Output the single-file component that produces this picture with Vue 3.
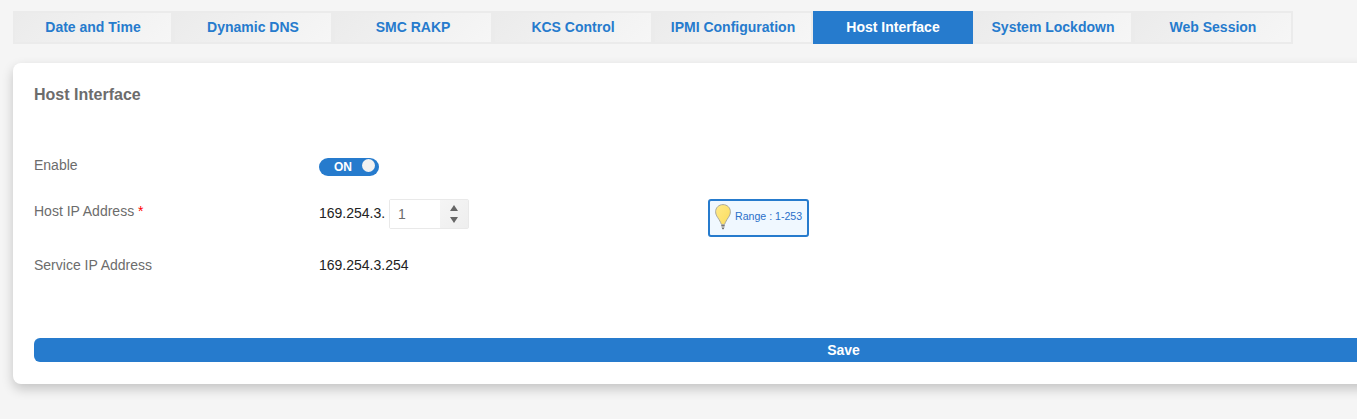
<template>
  <div class="page">
    <nav class="tabs">
      <button
        v-for="tab in tabs"
        :key="tab"
        class="tab"
        :class="{ active: tab === activeTab }"
        @click="activeTab = tab"
      >{{ tab }}</button>
    </nav>

    <section class="panel">
      <h2>Host Interface</h2>

      <div class="row row-enable">
        <span class="label">Enable</span>
        <button class="toggle" :class="{ off: !enabled }" @click="enabled = !enabled">
          <span class="toggle-text">{{ enabled ? 'ON' : 'OFF' }}</span>
          <span class="knob"></span>
        </button>
      </div>

      <div class="row row-host">
        <label class="label" for="hostIp">Host IP Address <span class="required">*</span></label>
        <div class="field">
          <span class="prefix">169.254.3.</span>
          <div class="spinner">
            <input id="hostIp" type="text" v-model.number="hostIp" />
            <div class="spinner-buttons">
              <button @click="step(1)">
                <svg width="8" height="6" viewBox="0 0 8 6"><path d="M4 0L8 6H0Z" fill="#666" /></svg>
              </button>
              <button @click="step(-1)">
                <svg width="8" height="6" viewBox="0 0 8 6"><path d="M0 0H8L4 6Z" fill="#666" /></svg>
              </button>
            </div>
          </div>
        </div>
        <div class="hint">
          <svg class="bulb" width="16" height="26" viewBox="0 0 16 26">
            <defs>
              <linearGradient id="glass" x1="0" y1="0" x2="1" y2="1">
                <stop offset="0" stop-color="#ffea8a" />
                <stop offset="1" stop-color="#fbdc5c" />
              </linearGradient>
            </defs>
            <path d="M8 .6C3.8.6.6 3.7.6 7.8c0 3.2 1.8 5.2 3.4 7.7 1.3 2 1.9 3.7 2.5 5h3c.6-1.3 1.2-3 2.5-5 1.600-2.500 3.400-4.500 3.400-7.700C15.400 3.700 12.200.6 8 .6Z" fill="url(#glass)" stroke="#a9a9a0" stroke-width="1" />
            <path d="M6.4 20.5h3.2v2.5L8.6 25.5H7.4L6.4 23Z" fill="#b0b0b0" />
            <path d="M6.4 21.5h3.2M7 24.5h2" stroke="#777" stroke-width="1" />
          </svg>
          <span>Range : 1-253</span>
        </div>
      </div>

      <div class="row row-service">
        <span class="label">Service IP Address</span>
        <span class="value">169.254.3.254</span>
      </div>

      <button class="save">Save</button>
    </section>
  </div>
</template>

<script setup>
import { ref } from 'vue';

const tabs = [
  'Date and Time',
  'Dynamic DNS',
  'SMC RAKP',
  'KCS Control',
  'IPMI Configuration',
  'Host Interface',
  'System Lockdown',
  'Web Session'
];

const activeTab = ref('Host Interface');
const enabled = ref(true);
const hostIp = ref(1);

// keep the last octet between 1 and 253
const step = (delta) => {
  hostIp.value = Math.min(253, Math.max(1, hostIp.value + delta));
};
</script>

<style>
body {
  background-color: #f5f5f5;
}
</style>

<style scoped>
.page {
  box-sizing: border-box;
  height: 419px;
  padding: 11px 0 0 13px;
  overflow: hidden;
  background-color: #f5f5f5;
  font-family: "Liberation Sans", Arial, sans-serif;
  font-size: 14px;
  line-height: 16px;
  color: #6c6c6c;
}
button,
input {
  box-sizing: border-box;
  margin: 0;
  padding: 0;
  border: none;
  font: inherit;
}
button {
  cursor: pointer;
}
.tabs {
  display: flex;
}
.tab {
  width: 160px;
  height: 33px;
  padding-bottom: 2px;
  border: 2px solid #ebebeb;
  background: linear-gradient(135deg, #ebebeb, #f6f6f6) padding-box;
  color: #267bcd;
  font-weight: bold;
}
.tab.active {
  border-color: #267bcd;
  background: #267bcd;
  color: #fff;
}
.panel {
  box-sizing: border-box;
  width: 1661px;
  height: 321px;
  margin-top: 19px;
  padding: 23px 21px 0;
  border-radius: 8px;
  background-color: #fff;
  box-shadow: 0 5px 12px rgba(0, 0, 0, 0.2);
}
h2 {
  margin: 0;
  font-size: 16px;
  line-height: 18px;
}
.row {
  display: flex;
  align-items: flex-start;
}
.label {
  width: 285px;
}
.required {
  color: #f00;
}
.row-enable {
  height: 42px;
  margin-top: 53px;
}
.toggle {
  display: flex;
  align-items: center;
  justify-content: space-between;
  width: 60px;
  height: 18px;
  margin-top: 1px;
  padding: 0 4px 0 15px;
  border-radius: 9px;
  background-color: #267bcd;
  color: #fff;
  font-size: 12px;
  font-weight: bold;
}
.toggle.off {
  background-color: #999;
}
.knob {
  width: 13px;
  height: 13px;
  margin-bottom: 3px;
  border-radius: 50%;
  background-color: #f1f1f1;
}
.row-host {
  height: 58px;
}
.row-host .label {
  padding-top: 4px;
}
.field {
  display: flex;
  width: 389px;
  color: #222;
}
.prefix {
  width: 70px;
  padding-top: 6px;
}
.spinner {
  display: flex;
  box-sizing: border-box;
  width: 80px;
  height: 30px;
  border: 1px solid #e9e9e9;
  border-radius: 2px;
}
.spinner input {
  width: 50px;
  height: 28px;
  padding-left: 8px;
  outline: none;
  background: #fff;
  color: #6c6c6c;
}
.spinner-buttons {
  display: flex;
  flex-direction: column;
  justify-content: center;
  flex: 1;
  background: linear-gradient(135deg, #f5f5f5, #eee);
}
.spinner-buttons button {
  display: flex;
  align-items: center;
  justify-content: center;
  height: 12px;
  background: none;
}
.hint {
  display: flex;
  align-items: center;
  box-sizing: border-box;
  width: 101px;
  height: 38px;
  padding: 0 0 5px 5px;
  border: 2px solid #267bcd;
  border-radius: 3px;
  background-color: #f0f8ff;
  color: #2a6fc9;
  font-size: 10.6px;
  white-space: nowrap;
}
.bulb {
  margin: 2px 4px 0 0;
}
.row-service {
  height: 81px;
}
.value {
  color: #222;
}
.save {
  display: block;
  width: 100%;
  height: 24px;
  border-radius: 6px;
  background-color: #267bcd;
  color: #fff;
  font-weight: bold;
}
</style>
